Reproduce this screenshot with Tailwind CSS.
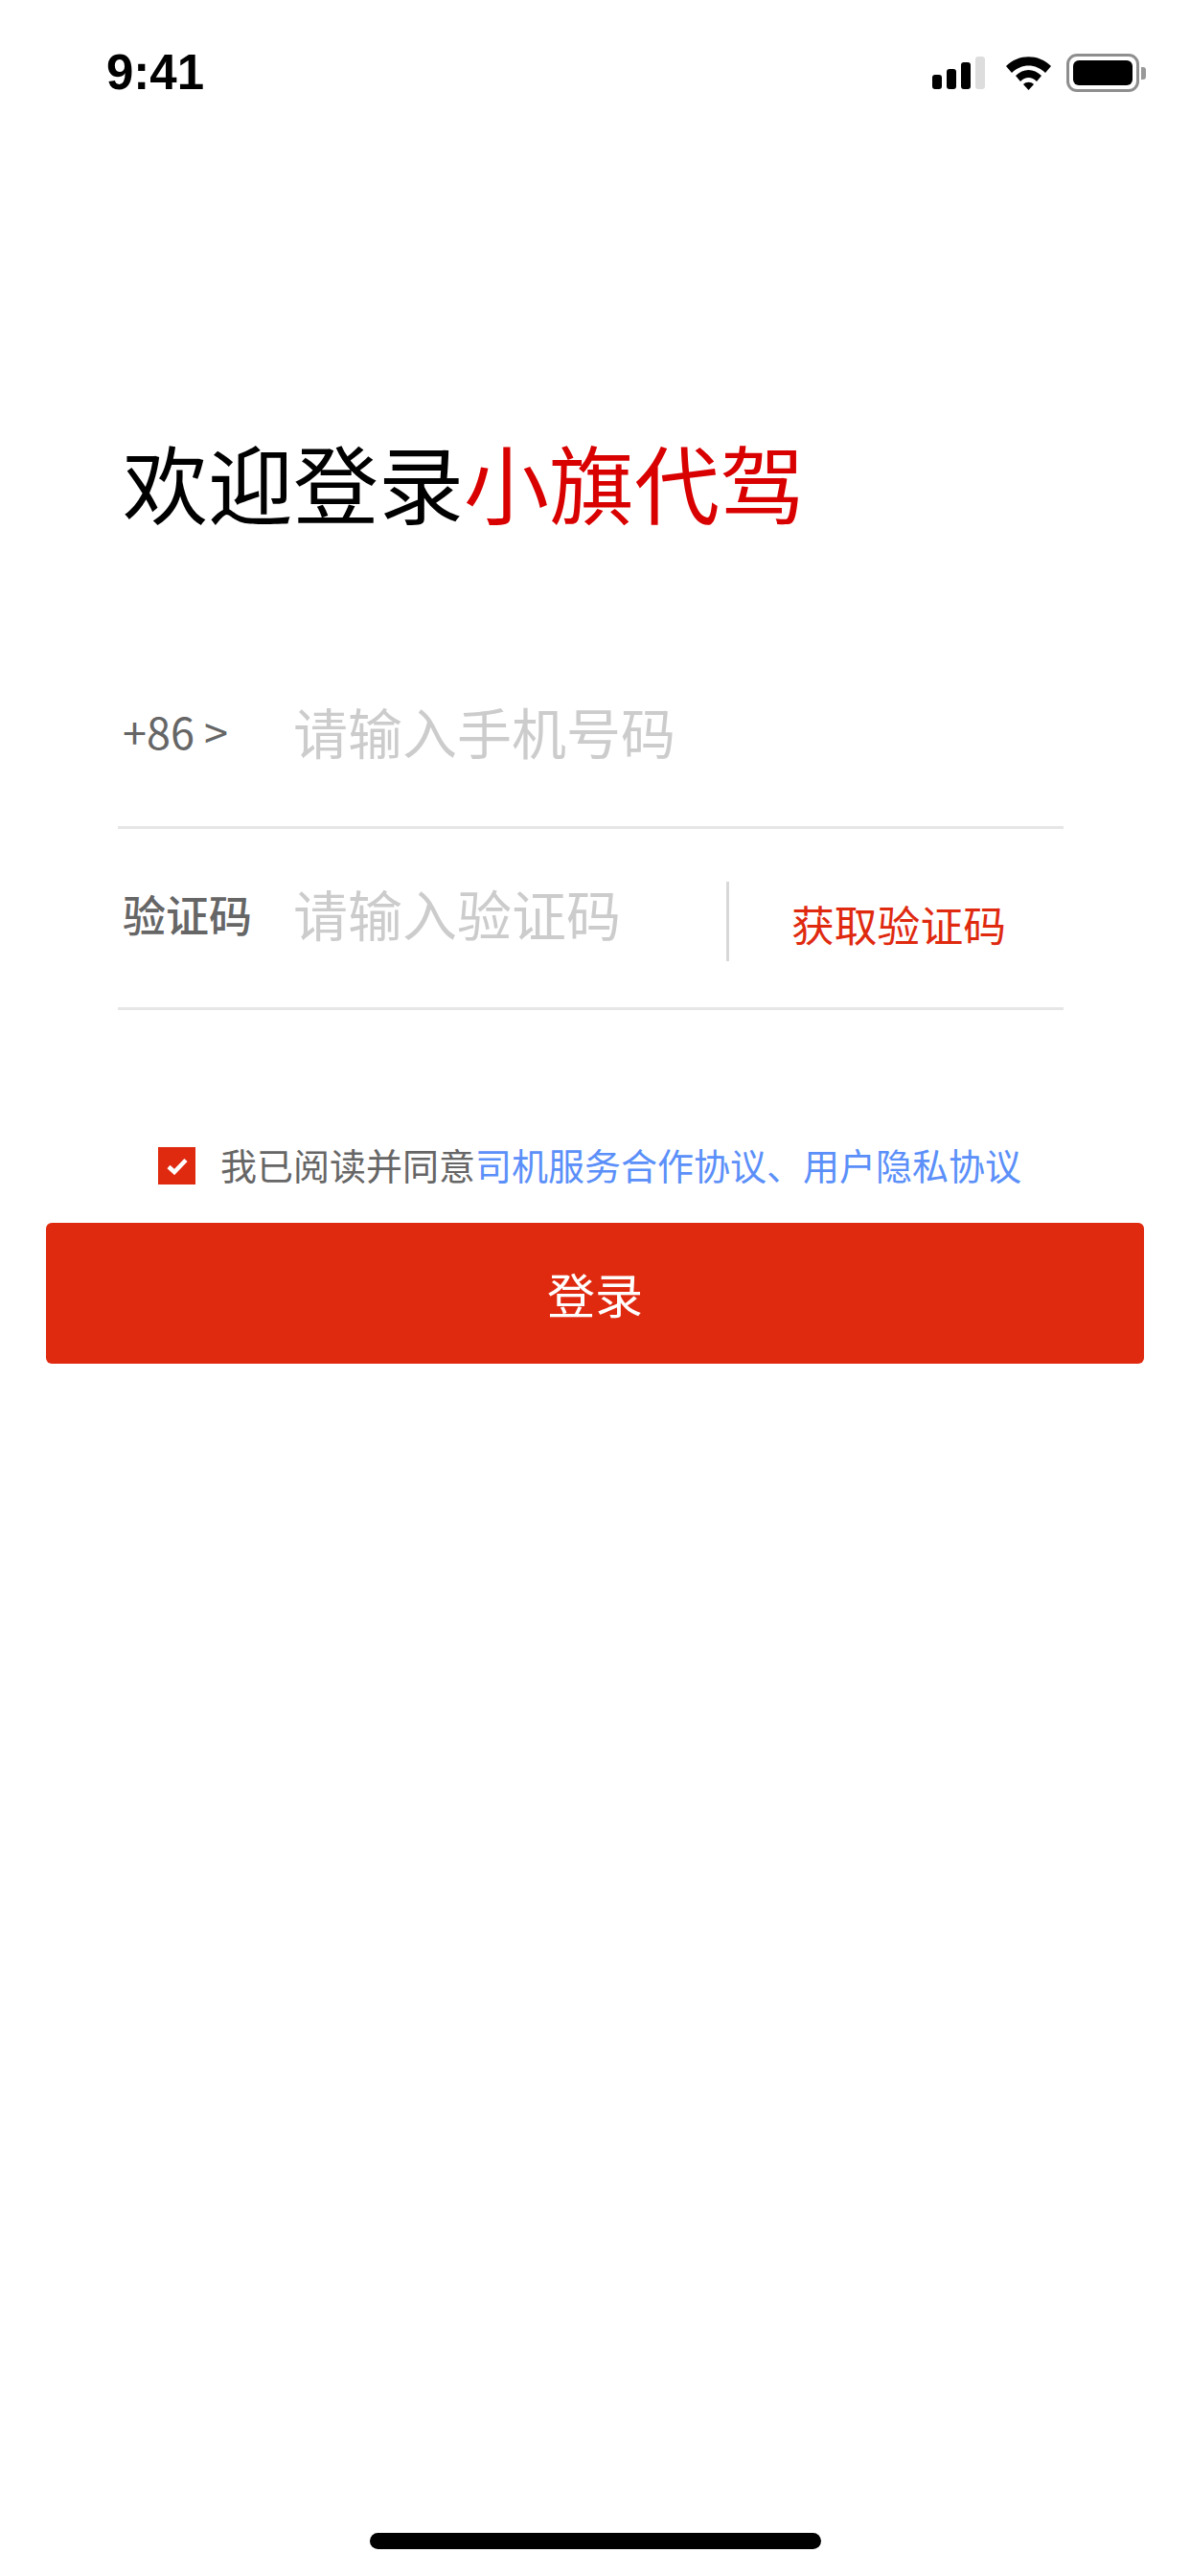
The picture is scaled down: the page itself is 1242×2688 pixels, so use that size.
<!DOCTYPE html>
<html lang="zh-CN">
  <head>
    <meta charset="UTF-8" />
    <meta name="viewport" content="width=device-width, initial-scale=1.0" />
    <title>登录</title>
    <script src="https://cdn.jsdelivr.net/npm/@tailwindcss/browser@4"></script>
  </head>

  <body class="bg-white font-['Noto_Sans_CJK_SC','Noto_Sans',sans-serif]">
    <div class="flex flex-col w-[1242px] h-[2688px] overflow-hidden">
      <!-- Status bar -->
      <div class="flex items-center justify-between h-[150px] pl-[111px] pr-[46px]">
        <span class="font-['Liberation_Sans',sans-serif] font-bold text-[51px] leading-none text-black">9:41</span>
        <div class="flex items-center gap-[22px] mt-[2px]">
          <svg class="w-[55px] h-[34px]" viewBox="0 0 55 34">
            <rect x="0" y="19" width="10" height="15" rx="3" fill="#000" />
            <rect x="15" y="13" width="10" height="21" rx="3" fill="#000" />
            <rect x="30" y="6" width="10" height="28" rx="3" fill="#000" />
            <rect x="45" y="0" width="10" height="34" rx="3" fill="#ddd" />
          </svg>
          <svg class="w-[47px] h-[35px]" viewBox="0 0 47 35">
            <path d="M0 10 C13 -3 34 -3 47 10 L41 17 C31 7 16 7 6 17 Z" fill="#000" />
            <path d="M10 20 C18 12 29 12 37 20 L32 26 C27 20.5 20 20.5 15 26 Z" fill="#000" />
            <path d="M18 29 C21 26 26 26 29 29 L23.5 35 Z" fill="#000" />
          </svg>
          <div class="flex items-center gap-[2px] -ml-[6px]">
            <div class="w-[76px] h-[40px] rounded-[11px] border-[3px] border-[#8e8e8e] p-[4px]">
              <div class="w-full h-full rounded-[6px] bg-black"></div>
            </div>
            <div class="w-[5px] h-[13px] rounded-r-[3px] bg-[#999]"></div>
          </div>
        </div>
      </div>

      <!-- Title -->
      <h1 class="mt-[287px] ml-[128px] text-[89px] leading-[130px] font-normal text-black whitespace-nowrap">
        欢迎登录<span class="text-[#d90000]">小旗代驾</span>
      </h1>

      <!-- Form -->
      <div class="mt-[135px] mx-[123px] w-[987px]">
        <div class="flex items-center h-[163px] border-b-[3px] border-[#e6e6e6] pb-[39px]">
          <span class="w-[183px] pl-[5px] text-[45px] text-[#666]">+86 &gt;</span>
          <input
            class="flex-1 text-[57px] text-[#333] placeholder:text-[#ccc] outline-none"
            type="text"
            placeholder="请输入手机号码"
          />
        </div>
        <div class="flex items-center h-[189px] border-b-[3px] border-[#e6e6e6]">
          <span class="w-[183px] pl-[5px] text-[45px] font-medium text-[#666] mb-[9px]">验证码</span>
          <input
            class="w-[452px] text-[57px] text-[#333] placeholder:text-[#ccc] outline-none mb-[10px]"
            type="text"
            placeholder="请输入验证码"
          />
          <div class="w-[3px] h-[83px] bg-[#d8d8d8] mt-[7px]"></div>
          <button class="ml-[65px] mt-[12px] text-[44.8px] text-[#df2a10] whitespace-nowrap" type="button">获取验证码</button>
        </div>
      </div>

      <!-- Agreement -->
      <div class="flex items-center mt-[136px] ml-[165px]">
        <div class="flex items-center justify-center w-[39px] h-[39px] mt-[2px] bg-[#df2a10]">
          <svg class="w-[22px] h-[18px]" viewBox="0 0 22 18">
            <path d="M2 9.5 L8 15 L20 2.5" fill="none" stroke="#fff" stroke-width="4.5" />
          </svg>
        </div>
        <p class="ml-[26px] mb-[1px] text-[38px] leading-[50px] text-[#666] whitespace-nowrap">
          我已阅读并同意<span class="text-[#5b8ff9]">司机服务合作协议、用户隐私协议</span>
        </p>
      </div>

      <!-- Login button -->
      <button class="mt-[35px] mx-[48px] h-[147px] rounded-[6px] bg-[#df2a10] text-[50px] text-white" type="button">登录</button>

      <!-- Home indicator -->
      <div class="mt-auto mb-[28px] mx-auto w-[471px] h-[17px] rounded-full bg-black"></div>
    </div>
  </body>
</html>
